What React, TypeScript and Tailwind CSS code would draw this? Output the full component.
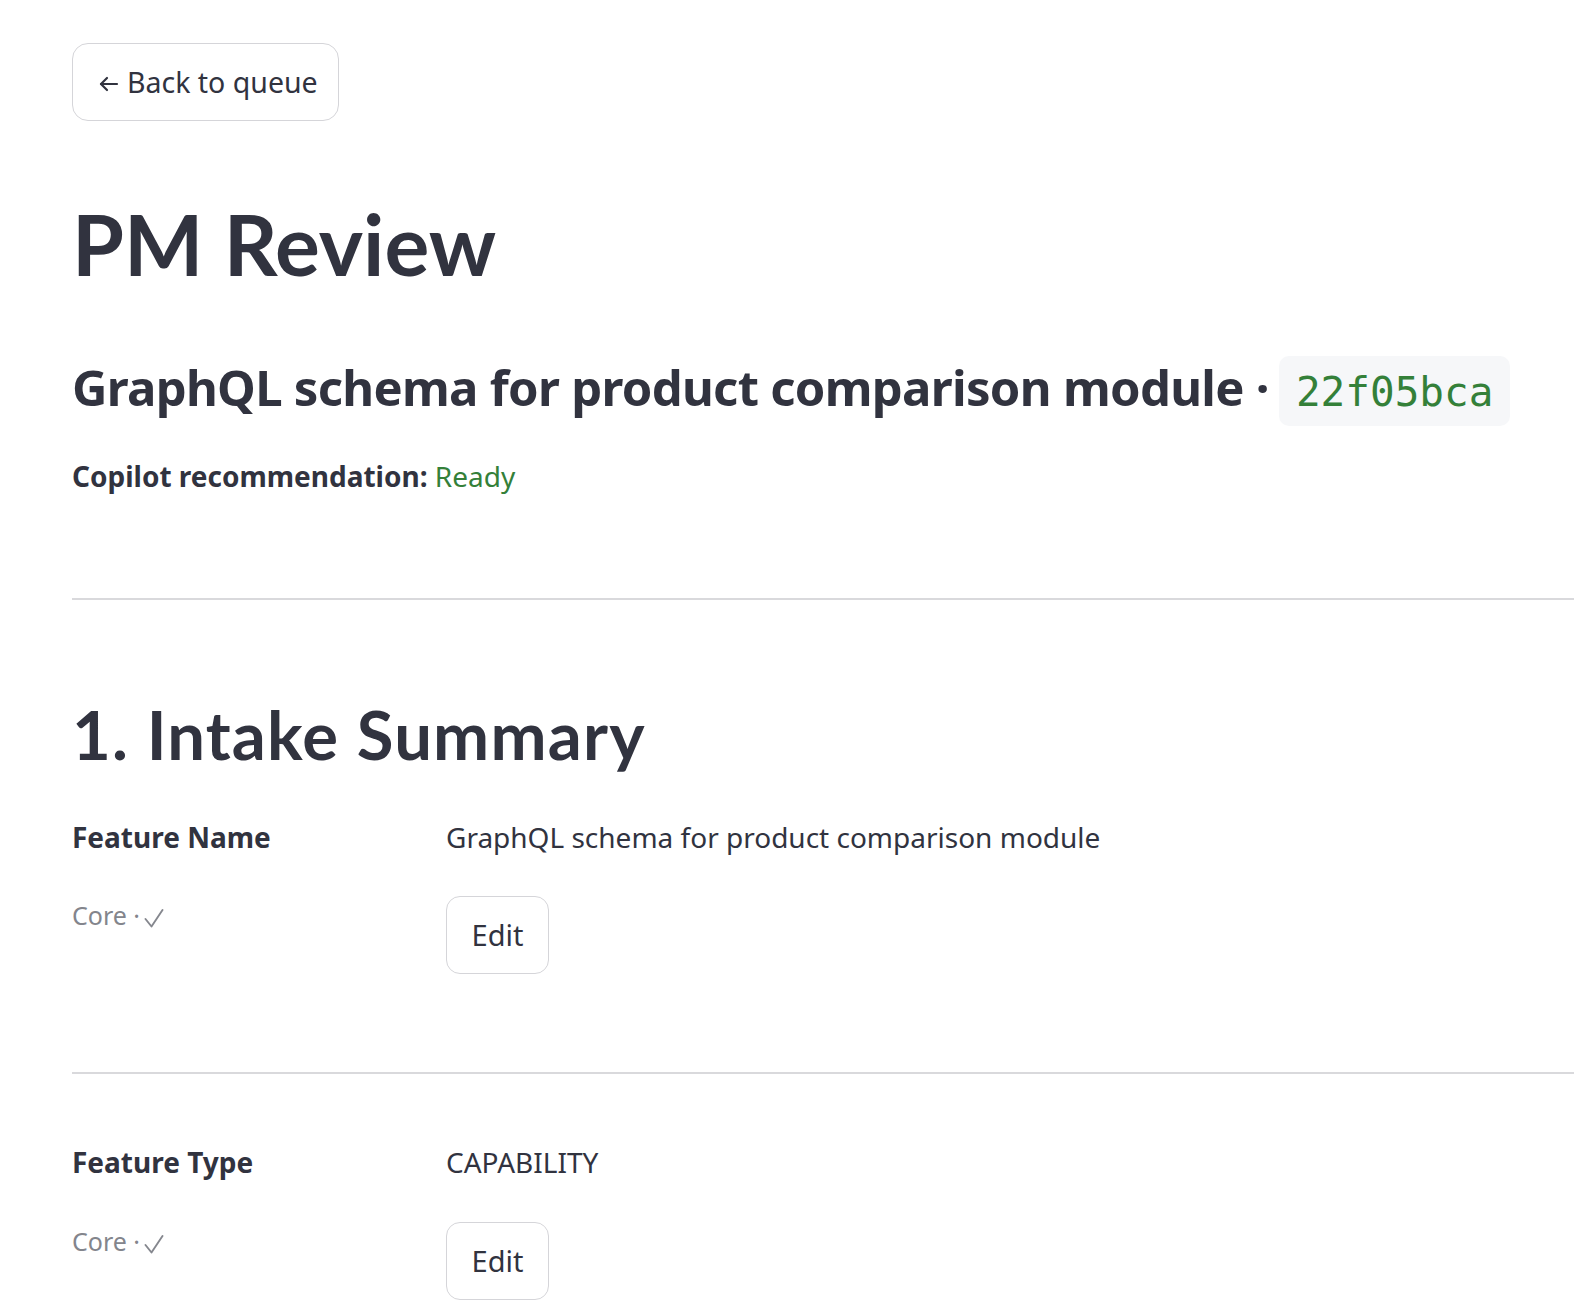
import React from "react";

const sans = { fontFamily: "'Noto Sans', Lato, sans-serif" };
const lato = { fontFamily: "Lato, 'Noto Sans', sans-serif" };

function Row({ label, value }: { label: string; value: string }) {
  return (
    <div className="grid grid-cols-[374px_1fr]">
      <div className="flex flex-col">
        <div className="text-[28px] leading-[1.2] font-bold text-[#31333f]">{label}</div>
        <div className="mt-[46px] flex items-start text-[25px] leading-[1.2] text-[#83858c]">
          <span>Core ·</span>
          <svg width="20" height="19" viewBox="0 0 20 19" fill="none" stroke="#85878e" strokeWidth="1.9" strokeLinecap="round" strokeLinejoin="round" className="ml-[4px] mt-[9px]">
            <path d="M1.5 10 L7.5 17.5 L18.5 1" />
          </svg>
        </div>
      </div>
      <div className="flex flex-col items-start">
        <div className="text-[28px] leading-[1.2] text-[#31333f]">{value}</div>
        <button className="mt-[42px] h-[78px] w-[103px] rounded-[14px] border border-[#d5d5d9] bg-white text-[29px] leading-[1.2] text-[#31333f] flex items-center justify-center">
          Edit
        </button>
      </div>
    </div>
  );
}

export default function App() {
  return (
    <div className="min-h-screen w-full overflow-hidden bg-white pl-[72px]" style={sans}>
      <div className="flex flex-col">
        <div className="pt-[43px]">
          <button className="h-[78px] w-[267px] rounded-[16px] border border-[#d5d5d9] bg-white flex items-center pl-[26px] text-[28.5px] leading-[1.2] text-[#31333f]">
            <svg width="20" height="16" viewBox="0 0 20 16" fill="none" stroke="#31333f" strokeWidth="2.2" strokeLinecap="round" strokeLinejoin="round" className="mr-[8px] mt-[4px]">
              <path d="M18 8H2" />
              <path d="M8 2L2 8l6 6" />
            </svg>
            Back to queue
          </button>
        </div>

        <h1 className="mt-[73px] text-[84px] leading-[1.2] font-bold text-[#31333f]" style={lato}>
          PM Review
        </h1>

        <div className="mt-[61px] flex items-baseline">
          <span className="text-[49px] leading-[1.2] font-bold tracking-[-0.7px] text-[#31333f]">
            GraphQL schema for product comparison module ·
          </span>
          <span
            className="ml-[10px] inline-block rounded-[10px] bg-[#f6f7f9] px-[17px] pt-[16px] pb-[13px] text-[41px] leading-none text-[#348039]"
            style={{ fontFamily: "'DejaVu Sans Mono', monospace" }}
          >
            22f05bca
          </span>
        </div>

        <div className="mt-[34px] text-[28px] leading-[1.2] text-[#31333f]">
          <span className="font-bold">Copilot recommendation:</span>{" "}
          <span className="text-[#348039]">Ready</span>
        </div>

        <div className="mt-[105px] h-[2px] w-full bg-[#d9d9dc]" />

        <h2 className="mt-[94px] text-[67px] leading-[1.2] font-bold tracking-[1.2px] text-[#31333f]" style={lato}>
          1. Intake Summary
        </h2>

        <div className="mt-[46px]">
          <Row label="Feature Name" value="GraphQL schema for product comparison module" />
        </div>

        <div className="mt-[98px] h-[2px] w-full bg-[#d9d9dc]" />

        <div className="mt-[72px]">
          <Row label="Feature Type" value="CAPABILITY" />
        </div>
      </div>
    </div>
  );
}
